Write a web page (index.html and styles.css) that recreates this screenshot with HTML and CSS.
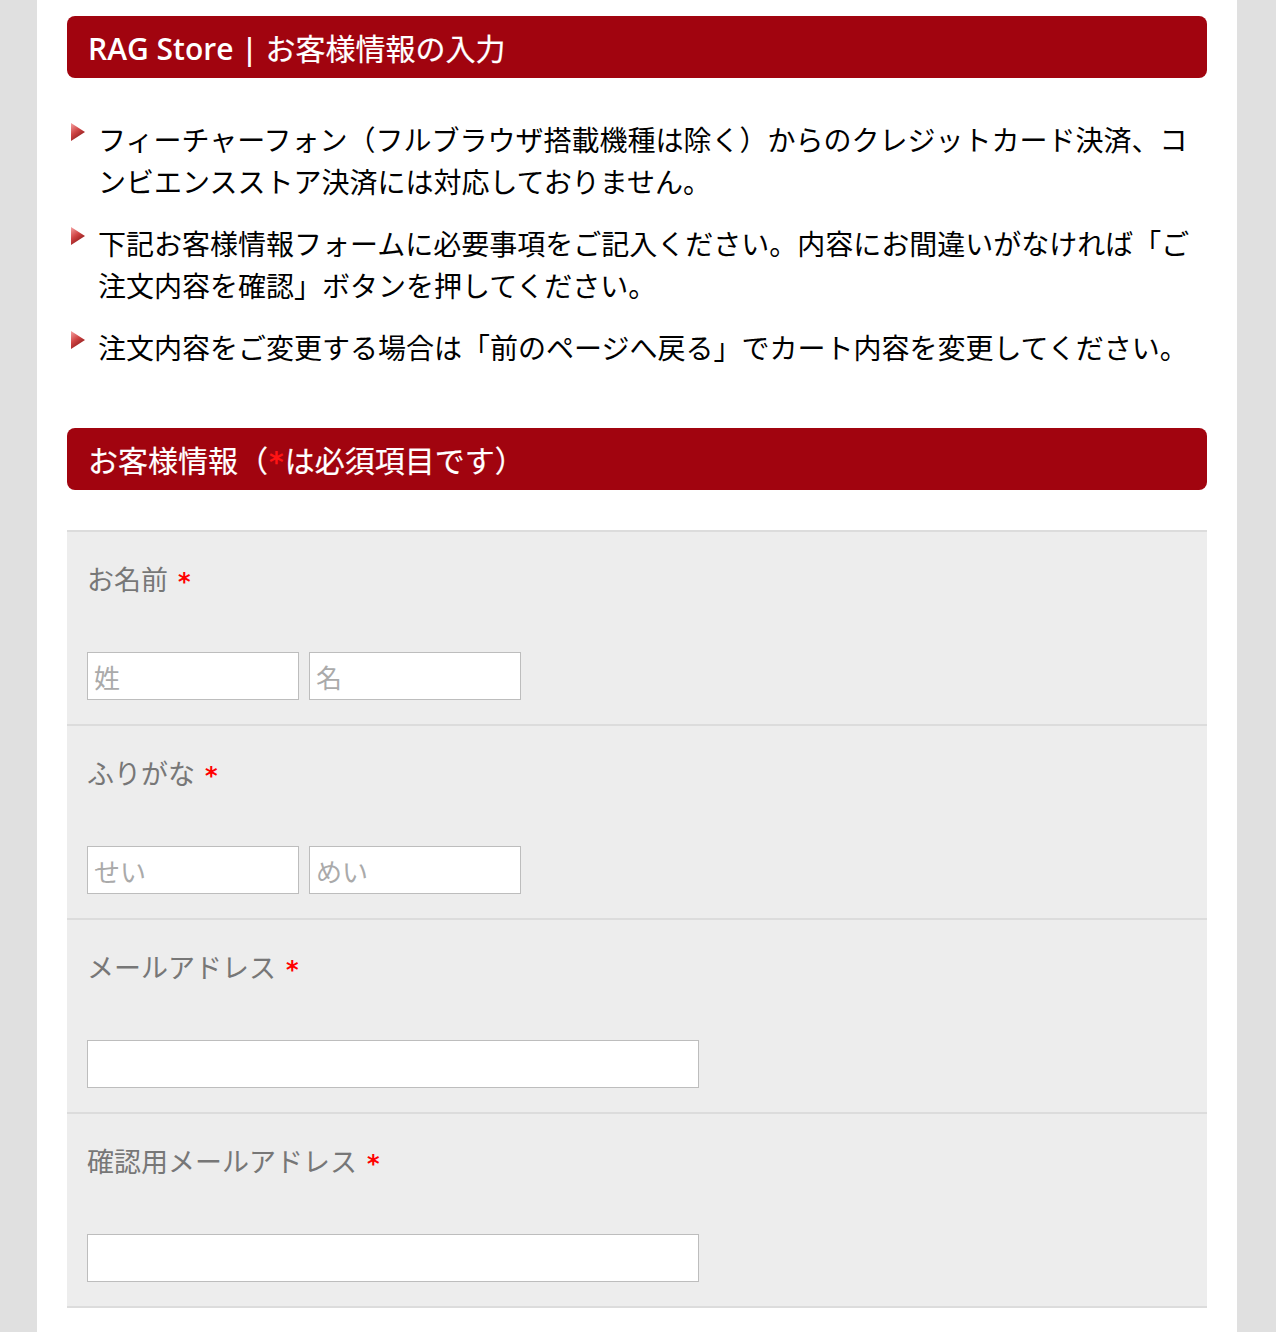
FILE: index.html
```html
<!DOCTYPE html>
<html lang="ja">
<head>
<meta charset="utf-8">
<title>RAG Store | お客様情報の入力</title>
<link rel="stylesheet" href="styles.css">
</head>
<body>
<div class="page">
  <h1 class="bar"><span class="latin">RAG Store | </span>お客様情報の入力</h1>
  <ul class="notes">
    <li><svg class="tri" width="16" height="20" viewBox="0 0 16 20"><defs><linearGradient id="g1" x1="0" y1="0" x2="0.6" y2="1"><stop offset="0" stop-color="#f5a3a3"/><stop offset="0.5" stop-color="#d04545"/><stop offset="1" stop-color="#861515"/></linearGradient></defs><polygon points="1,1 15,10 1,19" fill="url(#g1)"/></svg><span>フィーチャーフォン（フルブラウザ搭載機種は除く）からのクレジットカード決済、コンビエンスストア決済には対応しておりません。</span></li>
    <li><svg class="tri" width="16" height="20" viewBox="0 0 16 20"><polygon points="1,1 15,10 1,19" fill="url(#g1)"/></svg><span>下記お客様情報フォームに必要事項をご記入ください。内容にお間違いがなければ「ご注文内容を確認」ボタンを押してください。</span></li>
    <li><svg class="tri" width="16" height="20" viewBox="0 0 16 20"><polygon points="1,1 15,10 1,19" fill="url(#g1)"/></svg><span>注文内容をご変更する場合は「前のページへ戻る」でカート内容を変更してください。</span></li>
  </ul>
  <h2 class="bar">お客様情報（<span class="req-h">*</span>は必須項目です）</h2>
  <div class="form">
    <div class="row">
      <div class="label">お名前<span class="req">*</span></div>
      <div class="inputs">
        <input class="field half" type="text" placeholder="姓">
        <input class="field half" type="text" placeholder="名">
      </div>
    </div>
    <div class="row">
      <div class="label">ふりがな<span class="req">*</span></div>
      <div class="inputs">
        <input class="field half" type="text" placeholder="せい">
        <input class="field half" type="text" placeholder="めい">
      </div>
    </div>
    <div class="row">
      <div class="label">メールアドレス<span class="req">*</span></div>
      <div class="inputs">
        <input class="field wide" type="text">
      </div>
    </div>
    <div class="row">
      <div class="label">確認用メールアドレス<span class="req">*</span></div>
      <div class="inputs">
        <input class="field wide" type="text">
      </div>
    </div>
  </div>
</div>
</body>
</html>
```

FILE: styles.css
```css
html, body {
  margin: 0;
  padding: 0;
}
body {
  background: #e0e0e0;
  font-family: "Noto Sans CJK JP", "Open Sans", sans-serif;
  color: #000;
}
.page {
  width: 1140px;
  margin: 0 0 0 37px;
  padding: 16px 30px 30px;
  background: #fff;
  min-height: 1332px;
  box-sizing: content-box;
}
.bar {
  margin: 0;
  height: 62px;
  background: #a1040f;
  color: #fff;
  border-radius: 8px;
  font-size: 30px;
  font-weight: normal;
  line-height: 62px;
  padding: 0 21px;
  white-space: nowrap;
  -webkit-text-stroke: 0.2px #fff;
}
.latin {
  font-family: "Open Sans", sans-serif;
  font-weight: 600;
  white-space: pre;
  -webkit-text-stroke: 0;
}
.req-h {
  color: #ff1414;
  font-family: "DejaVu Sans", sans-serif;
  font-weight: bold;
  font-size: 28px;
  line-height: 0;
  margin: 0 1px;
  -webkit-text-stroke: 0;
}
.notes {
  list-style: none;
  margin: 40px 0 60px;
  padding: 0 0 0 3px;
}
.notes li {
  display: flex;
  gap: 12px;
  font-size: 28px;
  line-height: 42px;
  margin-bottom: 20px;
}
.notes li:last-child {
  margin-bottom: 0;
}
.tri {
  flex: none;
  margin-top: 4px;
}
.form {
  margin-top: 40px;
  background: #ededed;
  border-top: 2px solid #dcdcdc;
}
.row {
  padding: 27px 20px 24px;
  border-bottom: 2px solid #dcdcdc;
}
.label {
  font-size: 27px;
  line-height: 40px;
  height: 40px;
  color: #777;
  margin-bottom: 53px;
}
.req {
  color: #f00;
  margin-left: 10px;
  font-family: "DejaVu Sans", sans-serif;
  font-weight: bold;
  font-size: 24px;
  line-height: 0;
}
.inputs {
  display: flex;
  gap: 10px;
}
.field {
  height: 48px;
  box-sizing: border-box;
  border: 1px solid #bdbdbd;
  background: #fff;
  margin: 0;
  padding: 0 6px;
  font-family: "Noto Sans CJK JP", sans-serif;
  font-size: 26px;
  color: #333;
  outline: none;
  border-radius: 0;
}
.field::placeholder {
  color: #aaa;
}
.half {
  width: 212px;
}
.wide {
  width: 612px;
}
```
